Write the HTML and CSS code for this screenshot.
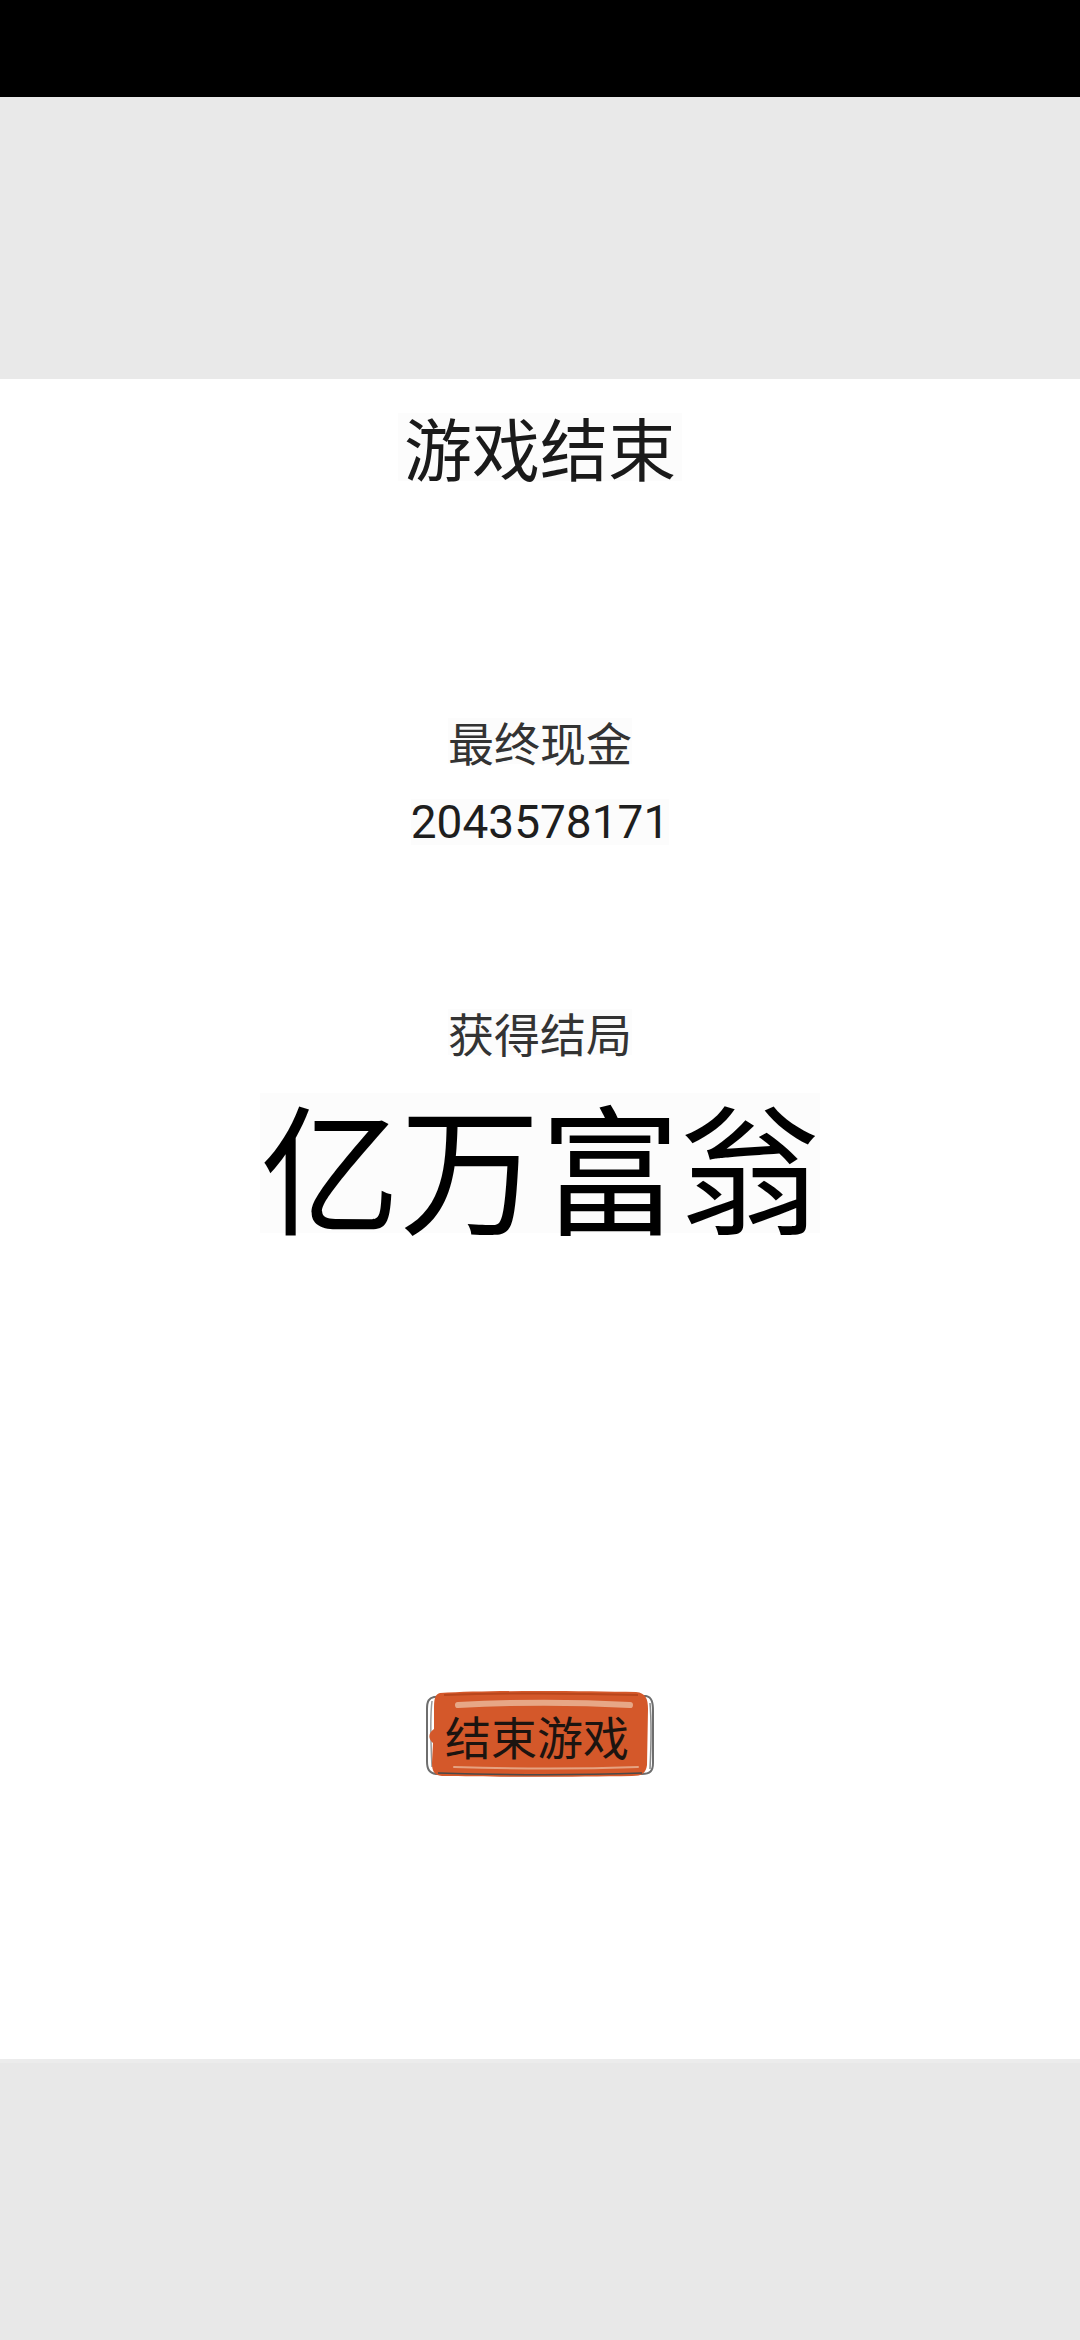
FILE: index.html
```html
<!DOCTYPE html>
<html lang="zh-CN">
<head>
  <meta charset="UTF-8">
  <meta name="viewport" content="width=device-width, initial-scale=1.0">
  <title>游戏结束</title>
  <link rel="stylesheet" href="styles.css">
</head>
<body>
  <div class="status-bar"></div>
  <div class="top-band"></div>

  <div class="content">
    <div class="title">游戏结束</div>

    <div class="label label-cash">最终现金</div>
    <div class="cash">2043578171</div>

    <div class="label label-ending">获得结局</div>
    <div class="ending">亿万富翁</div>

    <div class="end-btn">
      <svg class="end-btn-bg" width="232" height="92" viewBox="0 0 232 92" fill="none">
        <!-- pencil outline -->
        <path d="M10 10 C 60 7, 170 8, 222 9 C 228 10, 229 16, 229 24 L 229 76 C 229 84, 226 87, 218 87 C 160 88, 70 89, 12 87 C 5 86, 3 82, 3 74 L 3 22 C 3 14, 5 11, 10 10 Z" stroke="#6e6e6e" stroke-width="2"/>
        <path d="M8 14 C 6 30, 7 60, 8 80" stroke="#9a9a9a" stroke-width="1.5"/>
        <path d="M226 16 C 228 40, 227 62, 226 82" stroke="#8a8a8a" stroke-width="1.5"/>
        <!-- orange fill -->
        <path d="M16 6 C 70 3, 160 4, 212 5 C 222 6, 224 12, 224 22 L 223 78 C 222 86, 218 89, 208 89 C 150 90, 70 90, 18 89 C 10 88, 8 84, 8 76 L 9 56 C 4 52, 4 46, 10 42 L 10 20 C 10 10, 12 7, 16 6 Z" fill="#d4582a"/>
        <path d="M20 8 C 80 6, 150 6, 214 8" stroke="#b8461c" stroke-width="2"/>
        <!-- highlights -->
        <path d="M34 18 C 90 15, 150 15, 206 18" stroke="#eab597" stroke-width="6" stroke-linecap="round" opacity="0.85"/>
        <path d="M30 80 C 90 82, 160 82, 214 80" stroke="#eab597" stroke-width="2" stroke-linecap="round" opacity="0.8"/>
        <path d="M14 86 C 80 88, 160 88, 218 86" stroke="#4a4a4a" stroke-width="1.5"/>
      </svg>
      <span class="end-btn-text">结束游戏</span>
    </div>
  </div>

  <div class="bottom-band"></div>
</body>
</html>
```

FILE: styles.css
```css
* {
  margin: 0;
  padding: 0;
  box-sizing: border-box;
}

body {
  width: 1080px;
  height: 2340px;
  background: #ffffff;
  font-family: Roboto, "Noto Sans CJK SC", sans-serif;
  color: #111111;
  display: flex;
  flex-direction: column;
  overflow: hidden;
}

.status-bar {
  height: 97px;
  background: #000000;
}

.top-band {
  height: 282px;
  background: #e9e9e9;
}

.content {
  height: 1680px;
  background: #ffffff;
  display: flex;
  flex-direction: column;
  align-items: center;
  padding-top: 34px;
}

.title {
  font-family: "Noto Sans CJK SC", sans-serif;
  font-size: 68px;
  line-height: 68px;
  color: #1a1a1a;
  background: #fcfcfc;
  padding: 0 6px;
}

.label {
  font-family: "Noto Sans CJK SC", sans-serif;
  font-size: 46px;
  line-height: 46px;
  color: #333333;
  background: #fcfcfc;
}

.label-cash {
  margin-top: 237px;
}

.cash {
  margin-top: 35px;
  font-size: 46px;
  line-height: 46px;
  color: #1e1e1e;
  background: #fcfcfc;
}

.label-ending {
  margin-top: 164px;
}

.ending {
  margin-top: 38px;
  font-family: "Noto Sans CJK SC", sans-serif;
  font-size: 140px;
  line-height: 140px;
  color: #000000;
  background: #fcfcfc;
}

.end-btn {
  position: relative;
  margin-top: 454px;
  width: 232px;
  height: 92px;
  display: flex;
  align-items: center;
  justify-content: center;
}

.end-btn-bg {
  position: absolute;
  top: 0;
  left: 0;
}

.end-btn-text {
  position: relative;
  left: -3px;
  top: 2px;
  font-family: "Noto Sans CJK SC", sans-serif;
  font-size: 46px;
  line-height: 46px;
  color: #1c1410;
}

.bottom-band {
  flex: 1;
  background: #e8e8e8;
  border-top: 4px solid #ececec;
}
```
